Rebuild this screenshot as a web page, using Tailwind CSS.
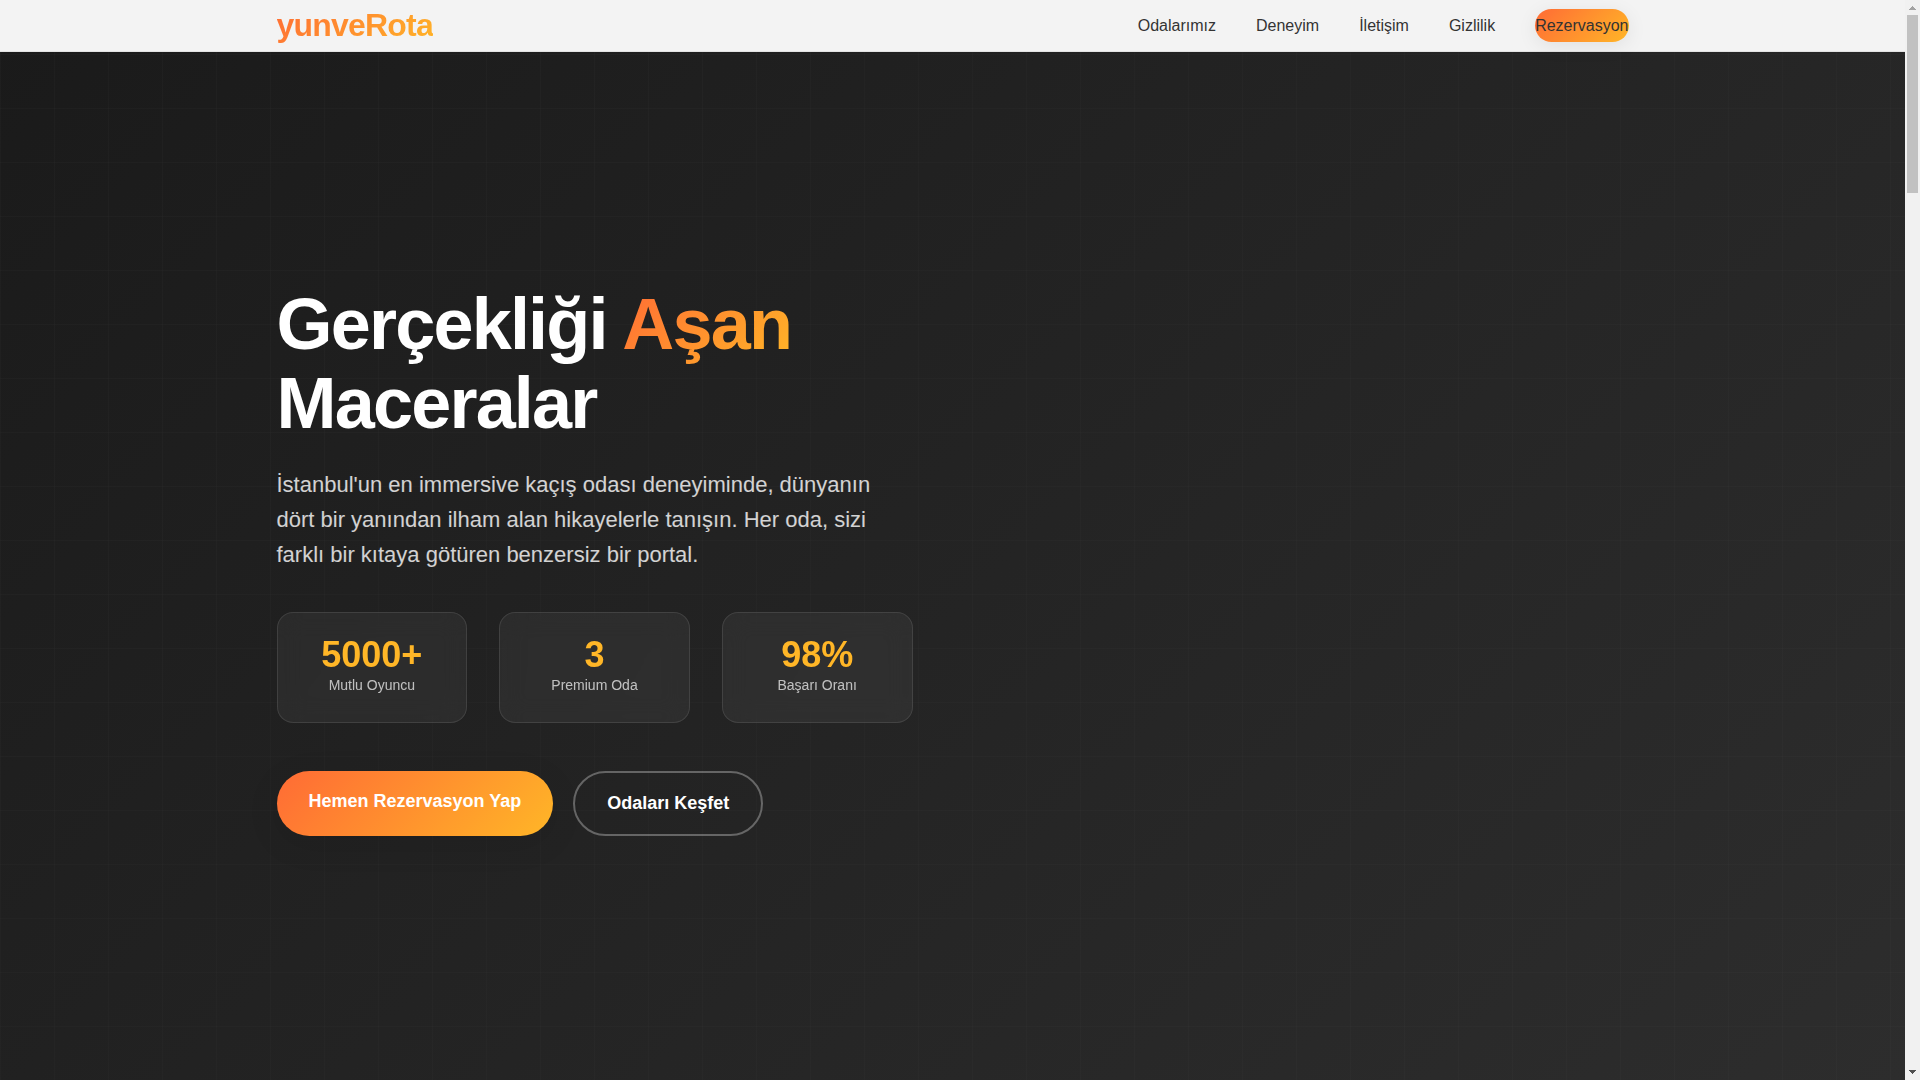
<!DOCTYPE html>
<html lang="tr">
<head>
  <meta charset="UTF-8" />
  <meta name="viewport" content="width=device-width, initial-scale=1.0" />
  <title>yunveRota | Kaçış Odası</title>
  <script src="https://cdn.jsdelivr.net/npm/@tailwindcss/browser@4"></script>
</head>
<body class="flex min-h-screen bg-[#1a1a1a] font-['Liberation_Sans',Arial,sans-serif] text-base text-[#333]">

  <div class="flex-1 min-w-0 flex flex-col bg-[linear-gradient(135deg,#1a1a1a_0%,#2d2d2d_100%)]">
    <div class="flex-1 flex flex-col bg-[linear-gradient(90deg,rgba(255,255,255,0.015)_1px,transparent_1px),linear-gradient(rgba(255,255,255,0.015)_1px,transparent_1px)] bg-[size:54px_54px]">

      <!-- Header -->
      <header class="sticky top-0 z-10 bg-[#f3f3f3] border-b border-[#e3e3e3]">
        <div class="max-w-[1400px] h-[51px] mx-auto px-6 flex items-center justify-between">
          <a href="#" class="text-[32px] leading-[51px] font-bold tracking-tight bg-[linear-gradient(135deg,#ff6b35,#ffb627)] bg-clip-text text-transparent">yunveRota</a>
          <nav class="flex items-center gap-10">
            <a href="#odalar" class="hover:text-[#ff6b35]">Odalarımız</a>
            <a href="#deneyim" class="hover:text-[#ff6b35]">Deneyim</a>
            <a href="#iletisim" class="hover:text-[#ff6b35]">İletişim</a>
            <a href="#gizlilik" class="hover:text-[#ff6b35]">Gizlilik</a>
            <a href="#rezervasyon" class="rounded-full leading-[33px] bg-[linear-gradient(135deg,#ff6b35,#ffb627)] shadow-[0_4px_20px_rgba(0,0,0,0.08)]">Rezervasyon</a>
          </nav>
        </div>
      </header>

      <!-- Hero -->
      <main class="flex-1 flex items-center pb-[11px]">
        <div class="w-full max-w-[1400px] mx-auto px-6 grid grid-cols-2 gap-20">
          <section>
            <h1 class="text-[72px] leading-[79px] font-bold tracking-tight text-white mb-6">
              Gerçekliği <span class="bg-[linear-gradient(135deg,#ff6b35,#ffb627)] bg-clip-text text-transparent">Aşan</span> Maceralar
            </h1>
            <p class="text-[22px] leading-[35px] text-white/80 mb-10">
              İstanbul'un en immersive kaçış odası deneyiminde, dünyanın dört bir yanından ilham alan hikayelerle tanışın. Her oda, sizi farklı bir kıtaya götüren benzersiz bir portal.
            </p>

            <!-- Stats -->
            <div class="grid grid-cols-3 gap-8 mb-12 text-center">
              <div class="p-6 rounded-2xl border border-white/10 bg-white/5 backdrop-blur-md">
                <div class="text-[36px] leading-[36px] font-bold text-[#ffb627]">5000+</div>
                <div class="text-sm leading-[25px] text-white/70">Mutlu Oyuncu</div>
              </div>
              <div class="p-6 rounded-2xl border border-white/10 bg-white/5 backdrop-blur-md">
                <div class="text-[36px] leading-[36px] font-bold text-[#ffb627]">3</div>
                <div class="text-sm leading-[25px] text-white/70">Premium Oda</div>
              </div>
              <div class="p-6 rounded-2xl border border-white/10 bg-white/5 backdrop-blur-md">
                <div class="text-[36px] leading-[36px] font-bold text-[#ffb627]">98%</div>
                <div class="text-sm leading-[25px] text-white/70">Başarı Oranı</div>
              </div>
            </div>

            <!-- Actions -->
            <div class="flex gap-5 text-lg leading-[29px] font-bold text-white">
              <a href="#rezervasyon" class="px-8 py-4 rounded-full leading-[29px] bg-[linear-gradient(135deg,#ff6b35,#ffb627)] shadow-[0_8px_32px_rgba(0,0,0,0.1)]">Hemen Rezervasyon Yap</a>
              <a href="#odalar" class="px-8 py-4 rounded-full leading-[29px] border-2 border-white/30">Odaları Keşfet</a>
            </div>
          </section>
        </div>
      </main>
    </div>
  </div>

  <!-- Scroll track -->
  <aside class="sticky top-0 w-[15px] h-screen bg-[#f1f1f1] flex flex-col items-center justify-between" aria-hidden="true">
    <div class="w-full flex flex-col items-center">
      <svg class="w-[15px] h-[15px]" viewBox="0 0 15 15" fill="#a3a3a3" shape-rendering="crispEdges">
        <path d="M7 6h1v1h1v1h1v1h1v1H4V9h1V8h1V7h1z" />
      </svg>
      <div class="w-[11px] h-[178px] bg-[#c1c1c1]"></div>
    </div>
    <svg class="w-[15px] h-[15px]" viewBox="0 0 15 15" fill="#505050" shape-rendering="crispEdges">
      <path d="M4 5h7v1h-1v1H9v1H8v1H7V8H6V7H5V6H4z" />
    </svg>
  </aside>

</body>
</html>
